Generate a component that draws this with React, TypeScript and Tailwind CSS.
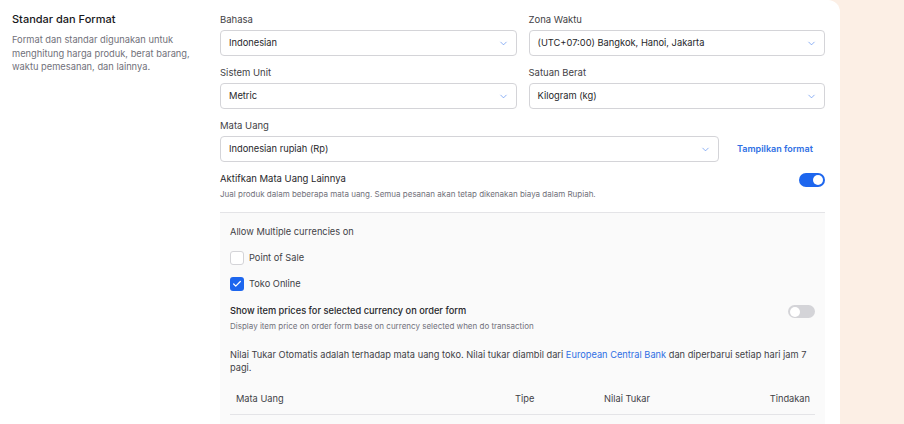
import { ChevronDown, Check } from "lucide-react";

function Select({ value }: { value: string }) {
  return (
    <div className="flex h-[26px] items-center justify-between rounded border border-[#d4d4d8] bg-white pl-[8px] pr-[7px]">
      <span className="text-[9.3px] text-[#27272a]">{value}</span>
      <ChevronDown className="h-[11px] w-[11px] text-[#5b8def]" strokeWidth={1.5} />
    </div>
  );
}

function Field({ label, value }: { label: string; value: string }) {
  return (
    <div className="flex flex-col gap-[4px]">
      <span className="text-[9.5px] leading-[12px] text-[#3f3f46]">{label}</span>
      <Select value={value} />
    </div>
  );
}

function Toggle({ on }: { on: boolean }) {
  return (
    <div
      className={
        on
          ? "flex h-[14px] w-[26px] items-center justify-end rounded-full bg-[#1d66ee] px-[2px]"
          : "flex h-[13px] w-[27px] items-center justify-start rounded-full bg-[#d4d4d8] px-[2px]"
      }
    >
      <div className="h-[10px] w-[10px] rounded-full bg-white" />
    </div>
  );
}

export default function App() {
  return (
    <div
      className="flex h-[424px] w-[904px] overflow-hidden bg-[#fcefe5]"
      style={{ fontFamily: "Inter, 'Noto Sans', sans-serif" }}
    >
      <div className="flex w-[840px] shrink-0 rounded-tr-xl bg-white">
        {/* left description */}
        <div className="w-[220px] shrink-0 pl-3 pt-[12px]">
          <h2 className="text-[11px] font-medium leading-[15px] text-[#18181b]">Standar dan Format</h2>
          <p className="mt-[6px] w-[185px] text-[9.3px] leading-[13.5px] text-[#71717a]">
            Format dan standar digunakan untuk menghitung harga produk, berat barang, waktu pemesanan, dan lainnya.
          </p>
        </div>

        {/* right form */}
        <div className="flex w-[605px] flex-col pt-[14px]">
          <div className="grid grid-cols-2 gap-x-3 gap-y-[11px]">
            <Field label="Bahasa" value="Indonesian" />
            <Field label="Zona Waktu" value="(UTC+07:00) Bangkok, Hanoi, Jakarta" />
            <Field label="Sistem Unit" value="Metric" />
            <Field label="Satuan Berat" value="Kilogram (kg)" />
          </div>

          <div className="mt-[11px] flex flex-col gap-[4px]">
            <span className="text-[9.5px] leading-[12px] text-[#3f3f46]">Mata Uang</span>
            <div className="flex items-center">
              <div className="w-[499px]">
                <Select value="Indonesian rupiah (Rp)" />
              </div>
              <span className="ml-[18px] text-[9px] font-semibold text-[#2f6fe4]">Tampilkan format</span>
            </div>
          </div>

          <div className="mt-[11px] flex items-start justify-between">
            <div className="flex flex-col">
              <span className="text-[9.5px] leading-[12px] text-[#27272a]">Aktifkan Mata Uang Lainnya</span>
              <span className="mt-[4px] text-[8px] leading-[11px] text-[#71717a]">
                Jual produk dalam beberapa mata uang. Semua pesanan akan tetap dikenakan biaya dalam Rupiah.
              </span>
            </div>
            <Toggle on />
          </div>

          <div className="mt-[12px] flex flex-1 flex-col border-t border-[#e4e4e7] bg-[#fafafa] px-[10px] pt-[13px]">
            <span className="text-[9.25px] leading-[12px] text-[#3f3f46]">Allow Multiple currencies on</span>

            <div className="mt-[13px] flex items-center gap-[5px]">
              <div className="h-[14px] w-[14px] rounded-[3px] border border-[#d4d4d8] bg-white" />
              <span className="text-[9.25px] text-[#3f3f46]">Point of Sale</span>
            </div>
            <div className="mt-[12px] flex items-center gap-[5px]">
              <div className="flex h-[14px] w-[14px] items-center justify-center rounded-[3px] bg-[#1d66ee]">
                <Check className="h-[10px] w-[10px] text-white" strokeWidth={3} />
              </div>
              <span className="text-[9.25px] text-[#3f3f46]">Toko Online</span>
            </div>

            <div className="mt-[14px] flex items-start justify-between">
              <div className="flex flex-col">
                <span className="text-[9.25px] font-medium leading-[12px] text-[#27272a]">
                  Show item prices for selected currency on order form
                </span>
                <span className="mt-[4px] text-[8px] leading-[11px] text-[#71717a]">
                  Display item price on order form base on currency selected when do transaction
                </span>
              </div>
              <Toggle on={false} />
            </div>

            <p className="mt-[16px] text-[9.25px] leading-[13px] text-[#3f3f46]">
              Nilai Tukar Otomatis adalah terhadap mata uang toko. Nilai tukar diambil dari{" "}
              <span className="text-[#2f6fe4]">European Central Bank</span> dan diperbarui setiap hari jam 7 pagi.
            </p>

            <div className="mt-[19px] flex border-b border-[#e4e4e7] pb-[9px] text-[9.25px] leading-[12px] text-[#3f3f46]">
              <span className="w-[285px] pl-[6px]">Mata Uang</span>
              <span className="w-[89px]">Tipe</span>
              <span className="flex-1">Nilai Tukar</span>
              <span className="pr-[5px]">Tindakan</span>
            </div>
          </div>
        </div>
      </div>
    </div>
  );
}
